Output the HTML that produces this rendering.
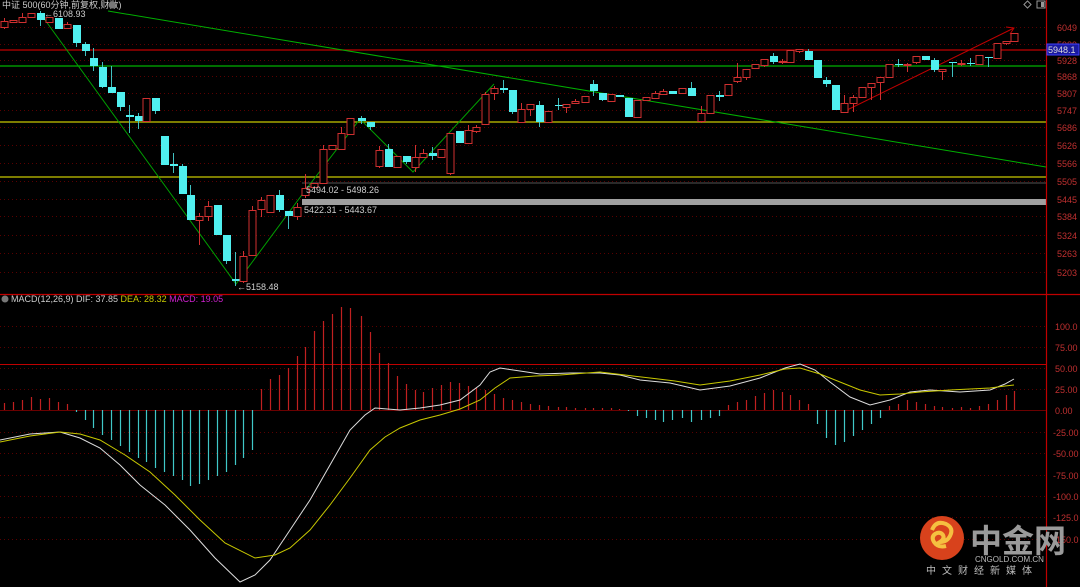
<!DOCTYPE html>
<html><head><meta charset="utf-8"><style>
html,body{margin:0;padding:0;background:#000;width:1080px;height:587px;overflow:hidden}
svg{display:block}
text{font-family:"Liberation Sans","Noto Sans CJK SC",sans-serif}
</style></head><body>
<svg id="s" width="1080" height="587" viewBox="0 0 1080 587" xmlns="http://www.w3.org/2000/svg">
<rect width="1080" height="587" fill="#000"/>
<g id="grid"></g>
<!-- horizontal level lines -->
<line x1="0" y1="50" x2="1046" y2="50" stroke="#c00000" stroke-width="1.2"/>
<line x1="0" y1="66" x2="1046" y2="66" stroke="#00b000" stroke-width="1.2"/>
<line x1="0" y1="122" x2="1046" y2="122" stroke="#c8c800" stroke-width="1.2"/>
<line x1="0" y1="177" x2="1046" y2="177" stroke="#c8c800" stroke-width="1.2"/>
<line x1="302" y1="183" x2="1046" y2="183" stroke="#555" stroke-width="1"/>
<rect x="302" y="199" width="744" height="6" fill="#a0a0a0"/>
<!-- trend lines -->
<line x1="108" y1="11" x2="1046" y2="167" stroke="#00b000" stroke-width="1"/>
<polyline points="40,13 236,284 304,192 360,119 413,172 494,84" fill="none" stroke="#00a000" stroke-width="1"/>
<line x1="843" y1="112" x2="1014" y2="28" stroke="#c00000" stroke-width="1"/>
<polyline points="1006,27 1014,28 1010,34" fill="none" stroke="#c00000" stroke-width="1"/>
<g id="candles"></g>
<!-- labels -->
<text x="2" y="8" font-size="9" fill="#ccc">中证 500(60分钟,前复权,财数)</text>
<circle cx="112" cy="5" r="3.5" fill="#777"/>
<text x="44" y="17" font-size="9" fill="#ccc">←6108.93</text>
<text x="237" y="290" font-size="9" fill="#ccc">←5158.48</text>
<text x="306" y="193" font-size="9" fill="#ccc">5494.02 - 5498.26</text>
<text x="304" y="213" font-size="9" fill="#ccc">5422.31 - 5443.67</text>
<!-- top icons -->
<rect x="1025" y="2" width="5" height="5" fill="none" stroke="#999" transform="rotate(45 1027.5 4.5)"/>
<rect x="1037" y="1" width="8" height="7" fill="none" stroke="#999"/>
<rect x="1041" y="2" width="3" height="5" fill="#999"/>
<!-- axis -->
<line x1="1046.5" y1="0" x2="1046.5" y2="587" stroke="#c00000" stroke-width="1.2"/>
<line x1="0" y1="294.5" x2="1080" y2="294.5" stroke="#c00000" stroke-width="1.2"/>
<line x1="0" y1="364.5" x2="1046" y2="364.5" stroke="#c00000" stroke-width="1"/>
<g id="axis" font-size="9" fill="#c03030"></g>
<rect x="1047" y="44" width="32" height="11" fill="#1a1aa0" stroke="#4040ff"/>
<text x="1048" y="53" font-size="9" fill="#ddd">5948.1</text>
<!-- macd header -->
<circle cx="5" cy="299" r="3.5" fill="#777"/>
<text x="11" y="302" font-size="9" fill="#ccc">MACD(12,26,9) DIF: 37.85 <tspan fill="#c8c800">DEA: 28.32</tspan> <tspan fill="#d020d0">MACD: 19.05</tspan></text>
<line x1="0" y1="410.5" x2="1046" y2="410.5" stroke="#6a0000" stroke-width="1"/>
<g id="macd"></g>
<polyline fill="none" stroke="#ddd" stroke-width="1" points="0,440 30,434 60,432 80,438 100,448 120,465 140,485 165,505 190,530 215,558 240,582 255,575 270,560 290,530 310,500 330,465 350,430 365,415 375,408 400,410 420,408 440,405 460,400 480,385 490,372 500,368 520,371 540,374 570,373 600,373 620,375 640,380 670,383 700,390 730,386 760,378 785,368 800,364 815,370 830,382 850,397 870,405 890,400 910,392 930,390 960,392 990,390 1005,384 1014,379"/>
<polyline fill="none" stroke="#c8c800" stroke-width="1" points="0,442 30,436 60,432 80,434 100,440 125,455 150,472 175,495 200,520 225,543 255,558 275,555 290,548 310,530 330,505 350,478 370,450 385,437 400,428 420,420 440,415 460,409 480,400 495,388 510,378 535,376 560,375 600,372 625,375 650,378 675,381 700,385 730,381 760,375 785,369 800,368 820,374 840,382 860,390 880,395 900,394 920,392 950,390 990,388 1005,386 1014,385"/>
<!-- logo -->
<circle cx="942" cy="538" r="22" fill="#d8421c"/>
<path d="M932 530 q4 -10 14 -6 q8 4 4 12 q-3 6 -10 6 q5 -3 3 -7 q-3 -4 -8 -1 q-4 3 -1 8 q4 6 12 4" fill="none" stroke="#f5c040" stroke-width="4"/>
<text x="970" y="552" font-size="32" font-weight="bold" fill="#9a9a9a" font-family="Liberation Sans,'Noto Sans CJK SC',sans-serif">中金网</text>
<text x="975" y="562" font-size="8" fill="#bbb">CNGOLD.COM.CN</text>
<text x="926" y="574" font-size="10" fill="#bbb" letter-spacing="6">中文财经新媒体</text>
</svg>
<script>
var NS="http://www.w3.org/2000/svg";
function el(p,t,a){var e=document.createElementNS(NS,t);for(var k in a)e.setAttribute(k,a[k]);p.appendChild(e);return e;}
var grid=document.getElementById('grid');
var py=[27,44,60,76,93,110,127,145,163,181,199,216,235,253,272];
var pl=["6049","5989","5928","5868","5807","5747","5686","5626","5566","5505","5445","5384","5324","5263","5203"];
var my=[326,347,368,389,410,432,453,475,496,517,539];
var ml=["100.0","75.00","50.00","25.00","0.00","-25.00","-50.00","-75.00","-100.0","-125.0","-150.0"];
var ax=document.getElementById('axis');
py.forEach(function(y,i){el(grid,'line',{x1:0,y1:y+.5,x2:1046,y2:y+.5,stroke:'#5a0000','stroke-dasharray':'1,3'});var t=el(ax,'text',{x:1057,y:y+4});t.textContent=pl[i];});
my.forEach(function(y,i){if(i!=4)el(grid,'line',{x1:0,y1:y+.5,x2:1046,y2:y+.5,stroke:'#5a0000','stroke-dasharray':'1,3'});var t=el(ax,'text',{x:ml[i].length>5?1053:1055,y:y+4});t.textContent=ml[i];});
// candles: x, top, bottom, wickTop, wickBottom, up(1)/down(0)
var C=[[4,21,27,18,29,1],[13,20,22,20,22,1],[22,17,22,13,23,1],[31,13,17,13,17,1],[40,13,20,11,26,0],[49,17,22,17,22,1],[58,18,29,18,29,0],[67,24,28,22,28,1],[76,25,43,25,47,0],[85,44,51,42,56,0],[93,58,66,48,71,0],[102,67,87,62,88,0],[111,87,93,66,93,0],[120,92,107,92,111,0],[129,115,117,105,133,0],[138,116,121,113,129,0],[146,98,121,98,121,1],[155,98,111,98,114,0],[164,136,165,136,165,0],[173,164,166,153,173,0],[182,166,194,164,194,0],[190,195,220,185,220,0],[199,216,220,213,245,1],[208,206,216,201,221,1],[217,205,235,205,235,0],[226,235,261,235,264,0],[235,279,281,252,286,0],[243,256,281,251,283,1],[252,210,255,206,255,1],[261,200,209,197,217,1],[270,195,212,195,212,1],[279,195,210,190,212,0],[288,211,216,211,229,0],[297,207,216,203,220,1],[305,188,195,174,198,1],[314,183,187,183,187,1],[323,149,183,145,183,1],[332,145,149,145,149,1],[341,133,149,127,149,1],[350,118,134,118,134,1],[361,118,121,116,124,0],[370,122,127,122,130,0],[379,150,166,146,168,1],[388,149,167,144,167,0],[397,156,167,156,167,1],[406,156,162,156,164,0],[415,157,167,145,172,1],[423,153,157,149,157,1],[432,153,156,147,160,0],[441,149,157,149,157,1],[450,133,173,133,175,1],[459,131,143,131,143,0],[468,130,143,125,143,1],[476,127,131,125,133,1],[485,94,124,92,124,1],[494,88,93,86,100,1],[503,88,90,80,93,0],[512,90,112,90,114,0],[521,109,122,103,122,1],[530,104,109,104,116,1],[539,105,122,101,127,0],[548,111,122,111,122,1],[558,105,106,98,110,0],[566,104,107,104,113,1],[575,101,103,99,103,1],[585,96,102,96,102,1],[593,84,91,80,96,0],[602,93,100,93,101,0],[611,94,101,94,101,1],[619,95,97,95,97,0],[628,98,117,98,117,0],[637,100,117,100,117,1],[646,97,100,97,100,1],[655,93,98,91,98,1],[663,91,94,89,94,1],[672,91,94,91,94,0],[682,88,93,88,93,1],[691,88,96,82,96,0],[701,113,121,106,123,1],[710,95,113,95,113,1],[719,95,97,91,101,0],[728,84,95,84,95,1],[737,77,81,63,83,1],[746,69,77,69,80,1],[755,64,68,64,68,1],[764,59,65,59,67,1],[773,56,62,53,64,0],[782,61,62,59,64,1],[790,50,62,50,62,1],[799,49,51,49,53,1],[808,51,60,49,60,0],[817,60,78,60,78,0],[826,80,84,77,87,0],[835,85,110,85,110,0],[844,103,112,95,112,1],[853,97,103,95,112,1],[862,87,97,87,97,1],[871,83,87,83,100,1],[880,77,82,77,100,1],[889,64,77,64,77,1],[898,64,65,59,67,0],[907,64,65,63,72,1],[916,56,62,56,64,1],[925,56,60,56,60,0],[934,60,70,58,72,0],[942,69,71,69,80,1],[952,62,63,62,77,0],[961,63,64,60,66,1],[970,63,64,58,66,0],[979,55,64,55,64,1],[988,57,58,57,67,0],[997,43,58,43,58,1],[1006,41,43,41,45,1],[1014,33,41,33,41,1]];
var cg=document.getElementById('candles');
C.forEach(function(c){var x=c[0],col=c[5]?'#d03030':'#50f0f0';
el(cg,'line',{x1:x+.5,y1:c[3],x2:x+.5,y2:c[4],stroke:c[5]?'#d03030':'#40c0c0'});
var h=Math.max(1,c[2]-c[1]);
if(c[5])el(cg,'rect',{x:x-3,y:c[1]+.5,width:7,height:h,fill:'#000',stroke:col,'stroke-width':1});
else el(cg,'rect',{x:x-3,y:c[1],width:8,height:h,fill:col});
});
// macd bars
var M=[7,8,10,13,11,12,8,6,-2,-10,-18,-25,-30,-36,-42,-48,-52,-58,-62,-66,-70,-76,-74,-70,-66,-62,-55,-48,-40,21,31,35,42,54,63,79,89,96,103,102,94,78,57,47,34,26,20,18,22,25,28,27,24,22,20,16,12,10,8,6,5,4,3,3,2,2,2,2,2,1,-1,-6,-8,-10,-12,-10,-8,-12,-10,-8,-6,5,8,10,14,17,20,18,15,10,6,-14,-28,-35,-32,-26,-20,-14,-8,4,6,10,8,6,4,3,2,3,2,4,6,10,15,19];
var mg=document.getElementById('macd');
C.forEach(function(c,i){var v=M[i]||0;if(!v)return;var x=c[0]+.5;
el(mg,'line',{x1:x,y1:410,x2:x,y2:410-v,stroke:v>0?'#c02020':'#40c8c8','stroke-width':1.2});});
</script>
</body></html>
